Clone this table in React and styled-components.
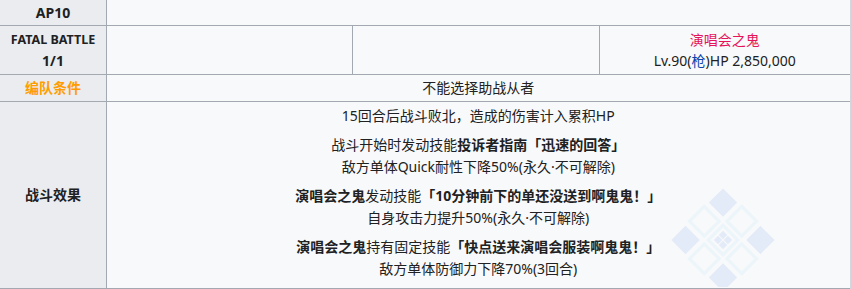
import styled, { createGlobalStyle } from "styled-components";

const GlobalStyle = createGlobalStyle`
  html, body {
    margin: 0;
    background: #fff;
  }
  body {
    font-family: "Noto Sans", "Noto Sans CJK SC", sans-serif;
    font-size: 14px;
    color: #202122;
  }
`;

const Frame = styled.div`
  width: 849px;
  border-right: 2px solid #d3d6da;
`;

const Table = styled.table`
  margin: -1px 0 0 -1px;
  width: 850px;
  table-layout: fixed;
  border-collapse: collapse;
  background: #f8f9fa;
`;

const Head = styled.th`
  height: ${(p) => p.$h}px;
  padding: 0 4px;
  background: #eaecf0;
  border: 1px solid #a2a9b1;
  font-weight: 700;
  line-height: 22px;
  text-align: center;
  vertical-align: middle;
  color: ${(p) => p.$color || "#202122"};
`;

const Cell = styled.td`
  position: relative;
  height: ${(p) => p.$h}px;
  padding: ${(p) => p.$pad || "0 6px"};
  border: 1px solid #a2a9b1;
  border-right: ${(p) => (p.$last ? "none" : "1px solid #a2a9b1")};
  line-height: 22px;
  text-align: center;
  vertical-align: ${(p) => p.$valign || "middle"};
`;

const Small = styled.div`
  font-size: 12.5px;
  line-height: 21px;
`;

const Big = styled.div`
  line-height: 21px;
`;

const EnemyName = styled.div`
  color: #e5145a;
  line-height: 21px;
`;

const EnemyStats = styled.div`
  line-height: 21px;
`;

const Link = styled.span`
  color: #0645ad;
`;

const Para = styled.p`
  position: relative;
  z-index: 1;
  margin: 0 0 7px;
  &:last-of-type {
    margin-bottom: 0;
  }
`;

const B = styled.b`
  font-weight: 700;
`;

const Mark = styled.svg`
  position: absolute;
  left: 564px;
  top: 86px;
  pointer-events: none;
`;

const Watermark = () => {
  const p = 26.5;
  const c = 52;
  const pos = [c - p, c, c + p];
  const fill = "#e3ebf8";
  const line = "#ebf5fa";
  const parts = [];
  pos.forEach((y, r) =>
    pos.forEach((x, k) => {
      const corner = r !== 1 && k !== 1;
      const center = r === 1 && k === 1;
      if (corner) {
        parts.push(
          <rect key={`${r}${k}`} x={x - 10} y={y - 10} width="20" height="20" fill={fill} />
        );
      } else {
        parts.push(
          <rect
            key={`${r}${k}`}
            x={x - 10.5}
            y={y - 10.5}
            width="21"
            height="21"
            fill="none"
            stroke={line}
            strokeWidth="3"
          />
        );
      }
      if (center) {
        [-3.5, 3.5].forEach((dy) =>
          [-3.5, 3.5].forEach((dx) =>
            parts.push(
              <rect
                key={`c${dx}${dy}`}
                x={x + dx - 3}
                y={y + dy - 3}
                width="6"
                height="6"
                fill={fill}
              />
            )
          )
        );
      }
    })
  );
  return (
    <Mark width="104" height="99" viewBox="0 0 104 99">
      <g transform="rotate(45 52 52)">{parts}</g>
    </Mark>
  );
};

export default function App() {
  return (
    <>
      <GlobalStyle />
      <Frame>
        <Table>
          <colgroup>
            <col style={{ width: 107 }} />
            <col style={{ width: 246 }} />
            <col style={{ width: 247 }} />
            <col style={{ width: 250 }} />
          </colgroup>
          <tbody>
            <tr>
              <Head $h={25}>AP10</Head>
              <Cell colSpan={3} $h={25} $last />
            </tr>
            <tr>
              <Head $h={48}>
                <Small>FATAL BATTLE</Small>
                <Big>1/1</Big>
              </Head>
              <Cell $h={48} />
              <Cell $h={48} />
              <Cell $h={48} $last>
                <EnemyName>演唱会之鬼</EnemyName>
                <EnemyStats>
                  Lv.90(<Link>枪</Link>)HP 2,850,000
                </EnemyStats>
              </Cell>
            </tr>
            <tr>
              <Head $h={26} $color="#ff9d00">
                编队条件
              </Head>
              <Cell colSpan={3} $h={26} $last>
                不能选择助战从者
              </Cell>
            </tr>
            <tr>
              <Head $h={186}>战斗效果</Head>
              <Cell colSpan={3} $h={175} $pad="3px 6px 8px" $valign="top" $last>
                <Watermark />
                <Para>15回合后战斗败北，造成的伤害计入累积HP</Para>
                <Para>
                  战斗开始时发动技能<B>投诉者指南「迅速的回答」</B>
                  <br />
                  敌方单体Quick耐性下降50%(永久·不可解除)
                </Para>
                <Para>
                  <B>演唱会之鬼</B>发动技能<B>「10分钟前下的单还没送到啊鬼鬼！」</B>
                  <br />
                  自身攻击力提升50%(永久·不可解除)
                </Para>
                <Para>
                  <B>演唱会之鬼</B>持有固定技能<B>「快点送来演唱会服装啊鬼鬼！」</B>
                  <br />
                  敌方单体防御力下降70%(3回合)
                </Para>
              </Cell>
            </tr>
          </tbody>
        </Table>
      </Frame>
    </>
  );
}
